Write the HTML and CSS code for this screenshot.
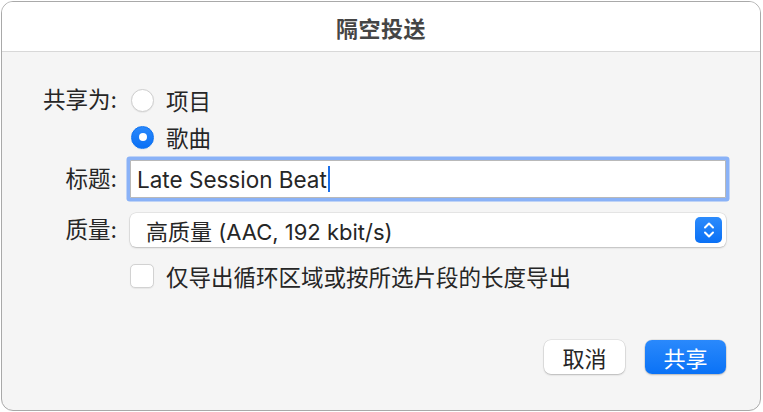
FILE: index.html
```html
<!DOCTYPE html>
<html lang="zh-CN">
<head>
    <meta charset="UTF-8">
    <meta name="viewport" content="width=device-width, initial-scale=1.0">
    <title>隔空投送</title>
    <link rel="stylesheet" href="styles.css">
</head>
<body>

    <div class="dialog">
        <div class="dialog-title">隔空投送</div>

        <div class="dialog-body">
            <div class="form">
                <div class="label label-top">共享为:</div>
                <div class="radio-group">
                    <div class="radio-row">
                        <span class="radio"></span>
                        <span>项目</span>
                    </div>
                    <div class="radio-row">
                        <span class="radio checked"></span>
                        <span>歌曲</span>
                    </div>
                </div>

                <div class="label row-field">标题:</div>
                <div class="text-field row-field">
                    <span class="text-value">Late Session Beat</span><span class="caret"></span>
                </div>

                <div class="label row-popup">质量:</div>
                <div class="popup row-popup">
                    <span>高质量 (AAC, 192 kbit/s)</span>
                    <span class="stepper">
                        <svg width="14" height="20" viewBox="0 0 14 20">
                            <path d="M3 7.5 L7 3.5 L11 7.5" fill="none" stroke="#fff" stroke-width="2" stroke-linecap="round" stroke-linejoin="round"/>
                            <path d="M3 12.5 L7 16.5 L11 12.5" fill="none" stroke="#fff" stroke-width="2" stroke-linecap="round" stroke-linejoin="round"/>
                        </svg>
                    </span>
                </div>

                <div class="label"></div>
                <div class="check-row">
                    <span class="checkbox"></span>
                    <span>仅导出循环区域或按所选片段的长度导出</span>
                </div>
            </div>

            <div class="buttons">
                <button class="btn">取消</button>
                <button class="btn btn-primary">共享</button>
            </div>
        </div>
    </div>

</body>
</html>
```

FILE: styles.css
```css
html {
    background: #fff;
}

body {
    margin: 0;
    padding: 1px;
    font-family: Inter, "Noto Sans CJK SC", sans-serif;
    color: #262626;
}

.dialog {
    width: 758px;
    height: 408px;
    border: 1px solid #a9a9a9;
    border-radius: 12px;
    background: #f5f5f5;
    overflow: hidden;
    display: flex;
    flex-direction: column;
}

.dialog-title {
    height: 49px;
    background: #fff;
    border-bottom: 1px solid #d8d8d8;
    display: flex;
    justify-content: center;
    align-items: center;
    font-size: 22px;
    font-weight: 600;
    color: #454545;
    letter-spacing: 0.5px;
}

.dialog-body {
    flex: 1;
    padding: 33px 34px 0 0;
}

.form {
    display: grid;
    grid-template-columns: 115px 1fr;
    column-gap: 13px;
    font-size: 22.5px;
}

.label {
    text-align: right;
    line-height: 30px;
}

.label-top {
    align-self: start;
}

.radio-group {
    display: flex;
    flex-direction: column;
    gap: 7px;
}

.radio-row, .check-row {
    height: 30px;
    display: flex;
    align-items: center;
    gap: 12px;
}

.radio {
    width: 21px;
    height: 21px;
    margin-left: 1px;
    border: 1px solid #cfcfcf;
    border-radius: 50%;
    background: #fff;
    box-shadow: 0 0.5px 1px rgba(0, 0, 0, 0.08);
    display: flex;
    justify-content: center;
    align-items: center;
}

.radio.checked {
    border-color: #0c72f2;
    background: linear-gradient(#2a88fb, #0a70f5);
}

.radio.checked::after {
    content: "";
    width: 8px;
    height: 8px;
    border-radius: 50%;
    background: #fff;
}

.row-field {
    margin-top: 8px;
}

.text-field {
    height: 36px;
    border: 1px solid #b9b9b9;
    background: #fff;
    box-shadow: 0 0 0 3.5px #8ab2f7;
    border-radius: 1px;
    display: flex;
    align-items: center;
    padding-left: 6px;
}

.label.row-field {
    line-height: 38px;
}

.caret {
    width: 2px;
    height: 26px;
    background: #1b6fea;
    margin-left: 1px;
}

.row-popup {
    margin-top: 15px;
}

.label.row-popup {
    line-height: 34px;
}

.popup {
    height: 34px;
    background: #fff;
    border-radius: 6px;
    box-shadow: 0 0 0 0.5px rgba(0, 0, 0, 0.12), 0 1px 2px rgba(0, 0, 0, 0.18);
    display: flex;
    align-items: center;
    justify-content: space-between;
    padding: 0 4px 0 16px;
    font-size: 22px;
}

.stepper {
    width: 27px;
    height: 26px;
    border-radius: 5px;
    background: linear-gradient(#2c8bfc, #0a70f5);
    display: flex;
    justify-content: center;
    align-items: center;
}

.check-row {
    margin-top: 14px;
}

.checkbox {
    width: 22px;
    height: 22px;
    border: 1px solid #d2d2d2;
    border-radius: 5px;
    background: #fff;
    box-shadow: 0 0.5px 1px rgba(0, 0, 0, 0.06);
}

.buttons {
    display: flex;
    justify-content: flex-end;
    gap: 20px;
    margin-top: 49px;
}

.btn {
    width: 81px;
    height: 34px;
    border: none;
    border-radius: 7px;
    background: #fff;
    box-shadow: 0 0 0 0.5px rgba(0, 0, 0, 0.12), 0 1px 2px rgba(0, 0, 0, 0.2);
    font-family: Inter, "Noto Sans CJK SC", sans-serif;
    font-size: 22px;
    color: #262626;
    padding: 0;
}

.btn-primary {
    background: linear-gradient(#2a89fc, #0a72f6);
    color: #fff;
}
```
